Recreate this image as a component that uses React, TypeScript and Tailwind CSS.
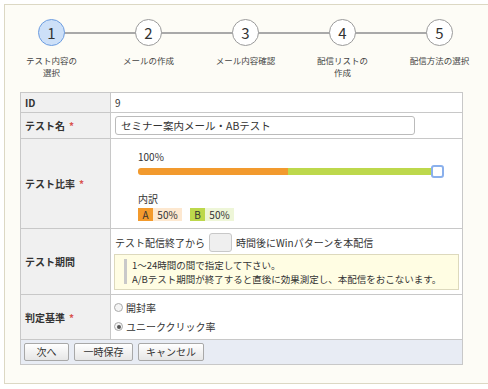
import React, { useState } from 'react';

const steps = [
  { no: 1, label: ['テスト内容の', '選択'] },
  { no: 2, label: ['メールの作成'] },
  { no: 3, label: ['メール内容確認'] },
  { no: 4, label: ['配信リストの', '作成'] },
  { no: 5, label: ['配信方法の選択'] },
];

const Req = () => <span className="text-[#d9534f] ml-1">*</span>;

const App: React.FC = () => {
  const [criteria, setCriteria] = useState<string>('click');

  return (
    <div
      className="w-[488px] h-[389px] bg-white pt-1 pl-1 overflow-hidden text-[#333]"
      style={{ fontFamily: '"Noto Sans CJK JP", "Noto Sans", sans-serif' }}
    >
      <div className="h-[380px] border-l border-t border-b border-[#dcd8c4] bg-[#fdfcf6]">
        {/* Steps */}
        <div className="relative flex ml-[-2px] pt-[14px] h-[87px]">
          <div className="absolute left-[49px] top-[27px] w-[390px] h-[2px] bg-[#a9a9a9]" />
          {steps.map((s) => (
            <div key={s.no} className="relative w-[97.5px] flex flex-col items-center">
              <div
                className={`w-[27px] h-[27px] rounded-full border-[1.5px] flex items-center justify-center text-[15px] leading-none ${
                  s.no === 1 ? 'bg-[#cde0f8] border-[#6d9de0]' : 'bg-white border-[#9a9a9a]'
                }`}
              >
                {s.no}
              </div>
              <div className="mt-[8px] text-[8.5px] leading-[12px] text-center text-[#444]">
                {s.label.map((l) => (
                  <div key={l}>{l}</div>
                ))}
              </div>
            </div>
          ))}
        </div>

        {/* Form */}
        <table className="ml-[15px] w-[443px] border-collapse text-[10px] bg-white">
          <tbody>
            <tr className="h-[20px]">
              <th className="w-[90px] border border-[#c8c8c8] bg-[#f0f0f0] text-left font-bold pl-1">ID</th>
              <td className="border border-[#c8c8c8] pl-1">9</td>
            </tr>
            <tr className="h-[26px]">
              <th className="border border-[#c8c8c8] bg-[#f0f0f0] text-left font-bold pl-1">
                テスト名<Req />
              </th>
              <td className="border border-[#c8c8c8] pl-1">
                <div className="w-[300px] h-[19px] border border-[#bbb] rounded-[3px] flex items-center pl-[5px] text-[10.5px]">
                  セミナー案内メール・ABテスト
                </div>
              </td>
            </tr>
            <tr className="h-[90px]">
              <th className="border border-[#c8c8c8] bg-[#f0f0f0] text-left font-bold pl-1">
                テスト比率<Req />
              </th>
              <td className="border border-[#c8c8c8] pl-[27px] align-top pt-[11px]">
                <div className="leading-[14px]">100%</div>
                <div className="flex items-center mt-[1px] h-[13px]">
                  <div className="w-[150px] h-[7px] bg-[#f29a2e] rounded-l-[3px]" />
                  <div className="w-[143px] h-[7px] bg-[#bdd84c]" />
                  <div className="w-[13px] h-[13px] bg-white border-2 border-[#8ab0ec] rounded-[3px]" />
                </div>
                <div className="mt-[14px] leading-[14px]">内訳</div>
                <div className="flex items-center mt-[2px] h-[13px] leading-[13px]">
                  <span className="w-[15px] h-[13px] bg-[#f39a2c] text-center">A</span>
                  <span className="w-[29px] h-[13px] bg-[#fde8d0] text-center">50%</span>
                  <span className="ml-[8px] w-[15px] h-[13px] bg-[#bdd84c] text-center">B</span>
                  <span className="w-[29px] h-[13px] bg-[#eef6d8] text-center">50%</span>
                </div>
              </td>
            </tr>
            <tr className="h-[66px]">
              <th className="border border-[#c8c8c8] bg-[#f0f0f0] text-left font-bold pl-1">テスト期間</th>
              <td className="border border-[#c8c8c8] px-[3px] pt-[3px] pb-[4px]">
                <div className="flex items-center gap-[4px] pl-[1px]">
                  <span>テスト配信終了から</span>
                  <div className="w-[23px] h-[19px] bg-[#efefef] border border-[#c8c8c8] rounded-[3px]" />
                  <span>時間後にWinパターンを本配信</span>
                </div>
                <div className="mt-[2px] h-[36px] bg-[#fffde3] border border-[#ddd9bd] flex items-center pl-[9px]">
                  <div className="w-[3px] h-[25px] bg-[#c9c9c9]" />
                  <div className="ml-[5px] text-[9.5px] leading-[14px]">
                    <div>1～24時間の間で指定して下さい。</div>
                    <div>A/Bテスト期間が終了すると直後に効果測定し、本配信をおこないます。</div>
                  </div>
                </div>
              </td>
            </tr>
            <tr className="h-[45px]">
              <th className="border border-[#c8c8c8] bg-[#f0f0f0] text-left font-bold pl-1">
                判定基準<Req />
              </th>
              <td className="border border-[#c8c8c8] pl-[3px]">
                {[
                  { v: 'open', t: '開封率' },
                  { v: 'click', t: 'ユニーククリック率' },
                ].map((r) => (
                  <label key={r.v} className="flex items-center h-[19px] gap-[2px]" onClick={() => setCriteria(r.v)}>
                    <span className="w-[9px] h-[9px] rounded-full border border-[#aaa] bg-[#f4f4f4] flex items-center justify-center">
                      {criteria === r.v && <span className="w-[4px] h-[4px] rounded-full bg-[#555]" />}
                    </span>
                    <span className="ml-[1px]">{r.t}</span>
                  </label>
                ))}
              </td>
            </tr>
            <tr className="h-[25px] bg-[#e8ecf4]">
              <td colSpan={2} className="border border-[#c8c8c8] pl-[3px]">
                <div className="flex gap-[5px]">
                  {[
                    { t: '次へ', w: 'w-[45px]' },
                    { t: '一時保存', w: 'w-[59px]' },
                    { t: 'キャンセル', w: 'w-[66px]' },
                  ].map((b) => (
                    <button
                      key={b.t}
                      className={`${b.w} h-[18px] border border-[#a8a8a8] rounded-[2px] bg-gradient-to-b from-white to-[#e6e6e6] text-[10px] leading-none`}
                    >
                      {b.t}
                    </button>
                  ))}
                </div>
              </td>
            </tr>
          </tbody>
        </table>
      </div>
    </div>
  );
};

export default App;
